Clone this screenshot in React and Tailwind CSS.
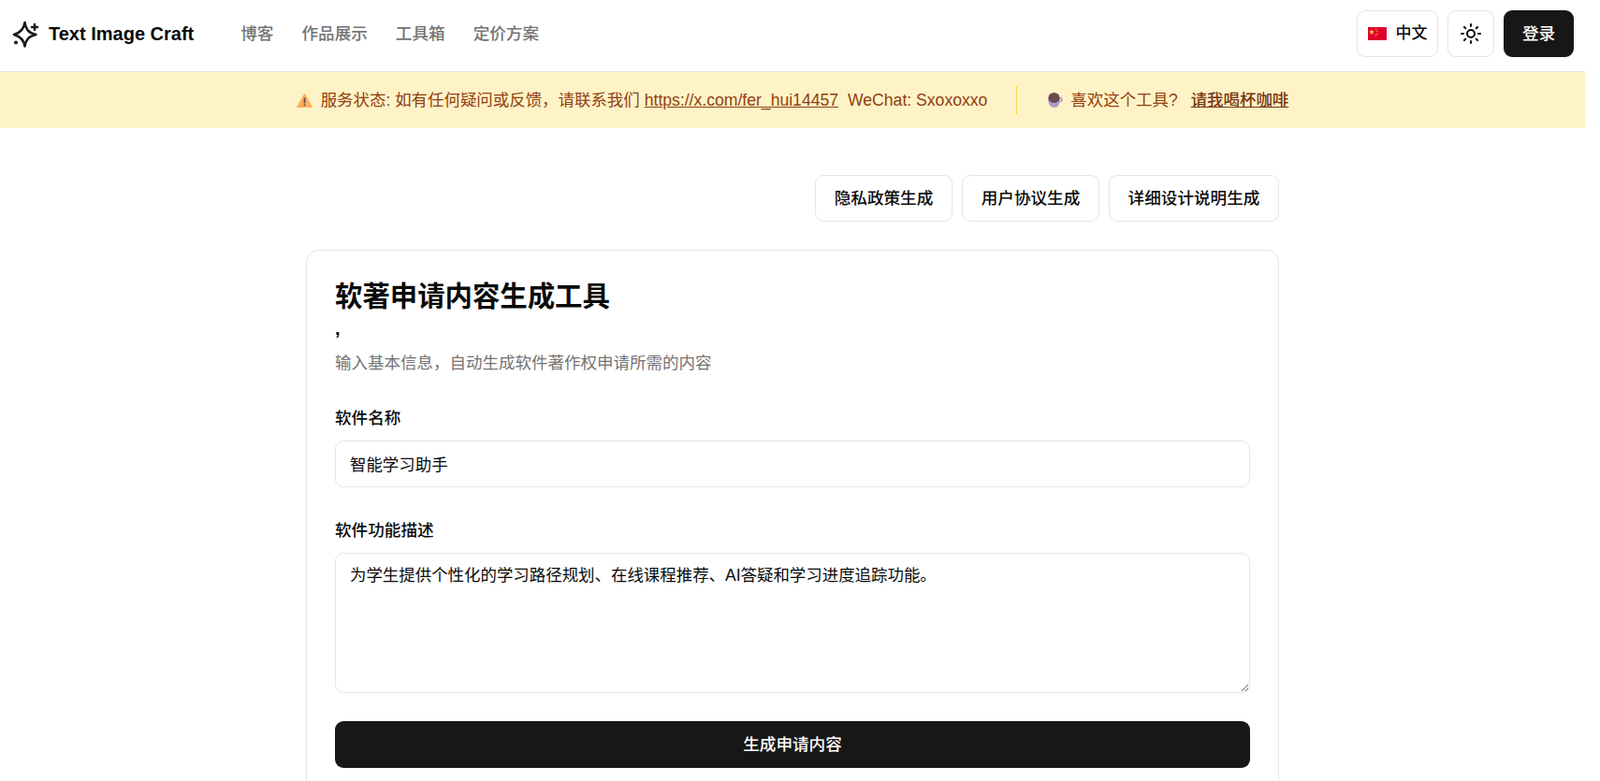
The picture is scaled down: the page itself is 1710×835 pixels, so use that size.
import React from 'react';
import { Sun } from 'lucide-react';

const FONT = "font-['Liberation_Sans','Noto_Sans_CJK_SC',sans-serif]";

const navItems = ['博客', '作品展示', '工具箱', '定价方案'];
const toolLinks = [
  { label: '隐私政策生成', width: 'w-[147px]' },
  { label: '用户协议生成', width: 'w-[147px]' },
  { label: '详细设计说明生成', width: 'w-[182px]' },
];

const LogoIcon = () => (
  <svg width="30" height="30" viewBox="0 0 30 30" fill="none" className="shrink-0 text-[#171717]" stroke="currentColor" strokeWidth="2.5" strokeLinecap="round" strokeLinejoin="round">
    <path d="M14.5 3 C15.5 10 18 14 26.5 16 C18 18 15.5 22 14.5 28.5 C13.5 22 10.5 18 3 16 C10.5 14 13.5 10 14.5 3 Z" />
    <path d="M25 5 V11 M22 8 H28" />
    <circle cx="5" cy="24.5" r="0.8" fill="currentColor" />
  </svg>
);

const ChinaFlag = () => (
  <svg width="20" height="14" viewBox="0 0 20 14" className="shrink-0">
    <rect width="20" height="14" fill="#de002e" />
    <polygon points="4,2 4.8,4.3 7,4.3 5.3,5.7 6,8 4,6.6 2,8 2.7,5.7 1,4.3 3.2,4.3" fill="#f8c53a" />
    <circle cx="8.5" cy="2.2" r="0.7" fill="#f8c53a" />
    <circle cx="10" cy="4.4" r="0.7" fill="#f8c53a" />
    <circle cx="10" cy="7" r="0.7" fill="#f8c53a" />
    <circle cx="8.5" cy="9" r="0.7" fill="#f8c53a" />
  </svg>
);

const WarningIcon = () => (
  <svg width="17" height="15" viewBox="0 0 17 15" className="shrink-0">
    <path d="M8.5 0.5 L16.5 14.5 L0.5 14.5 Z" fill="#ffac5c" stroke="#ffac5c" strokeLinejoin="round" />
    <rect x="7.7" y="4.5" width="1.7" height="6" fill="#55504a" />
    <rect x="7.7" y="11.5" width="1.7" height="1.8" fill="#55504a" />
  </svg>
);

const CoffeeIcon = () => (
  <svg width="17" height="18" viewBox="0 0 17 18" className="shrink-0">
    <path d="M1 6 C1 13 3 17 8 17 C12 17 14 13 14 7 Z" fill="#ab9dcb" />
    <circle cx="14" cy="8.5" r="2" fill="none" stroke="#ab9dcb" strokeWidth="1.5" />
    <ellipse cx="7.5" cy="6.5" rx="6" ry="5.5" fill="#6e4a4e" />
  </svg>
);

export default function App() {
  return (
    <div className={`${FONT} h-[835px] overflow-hidden bg-white text-[#0a0a0a]`}>
      <div className="w-[1694px]">
        <header className="flex h-[77px] items-center border-b border-[#e5e5e5] pr-[12px] pb-[4px] pl-[12px]">
          <div className="flex items-center gap-[10px]">
            <LogoIcon />
            <span className="text-[20px] font-bold">Text Image Craft</span>
          </div>
          <nav className="ml-[50px] flex items-center gap-[30px]">
            {navItems.map((item) => (
              <a key={item} href="#" className="text-[17.6px] font-medium text-[#737373]">
                {item}
              </a>
            ))}
          </nav>
          <div className="ml-auto flex items-center gap-[10px]">
            <button className="flex h-[50px] w-[87px] items-center justify-center gap-[10px] rounded-[9px] border border-[#e5e5e5] text-[17px] font-medium">
              <ChinaFlag />
              中文
            </button>
            <button className="flex h-[50px] w-[50px] items-center justify-center rounded-[9px] border border-[#e5e5e5]">
              <Sun size={24} />
            </button>
            <button className="h-[50px] w-[75px] rounded-[9px] bg-[#171717] text-[17.6px] font-medium text-white">
              登录
            </button>
          </div>
        </header>

        <div className="flex h-[60px] items-center justify-center bg-[#fef3c7] text-[17.46px] text-[#92400e]">
          <WarningIcon />
          <span className="ml-[9px]">服务状态: 如有任何疑问或反馈，请联系我们</span>
          <a href="#" className="ml-[5px] text-[17.6px] underline">https://x.com/fer_hui14457</a>
          <span className="ml-[10px] text-[17.6px]">WeChat: Sxoxoxxo</span>
          <span className="mr-[32px] ml-[31px] h-[30px] w-px bg-[#fcd34d]" />
          <CoffeeIcon />
          <span className="ml-[8px]">喜欢这个工具?</span>
          <a href="#" className="ml-[14px] font-medium text-[#78350f] underline">请我喝杯咖啡</a>
        </div>

        <main className="mx-auto mt-[50px] w-[1040px]">
          <div className="flex justify-end gap-[10px]">
            {toolLinks.map((link) => (
              <button
                key={link.label}
                className={`h-[50px] rounded-[9px] border border-[#e5e5e5] text-[17.6px] font-medium ${link.width}`}
              >
                {link.label}
              </button>
            ))}
          </div>

          <section className="mt-[30px] rounded-[13px] border border-[#e5e5e5] px-[30px] pt-[31px] pb-[40px]">
            <h1 className="text-[29.4px] leading-[35px] font-bold">软著申请内容生成工具</h1>
            <p className="h-[40px] text-[20px] leading-[34px] font-bold">,</p>
            <p className="text-[17.5px] leading-[28px] text-[#737373]">输入基本信息，自动生成软件著作权申请所需的内容</p>

            <label className="mt-[32px] block text-[17.6px] leading-[26px] font-medium">软件名称</label>
            <input
              readOnly
              value="智能学习助手"
              className="mt-[11px] block h-[50px] w-full rounded-[9px] border border-[#e5e5e5] px-[15px] pb-[2px] text-[17.46px] outline-none"
            />

            <label className="mt-[33px] block text-[17.6px] leading-[26px] font-medium">软件功能描述</label>
            <textarea
              readOnly
              value="为学生提供个性化的学习路径规划、在线课程推荐、AI答疑和学习进度追踪功能。"
              className="mt-[11px] block h-[150px] w-full rounded-[9px] border border-[#e5e5e5] px-[15px] py-[10px] text-[17.46px] leading-[26px] outline-none"
            />

            <button className="mt-[30px] block h-[50px] w-full rounded-[9px] bg-[#171717] text-[17.6px] font-medium text-white">
              生成申请内容
            </button>
          </section>
        </main>
      </div>
    </div>
  );
}
